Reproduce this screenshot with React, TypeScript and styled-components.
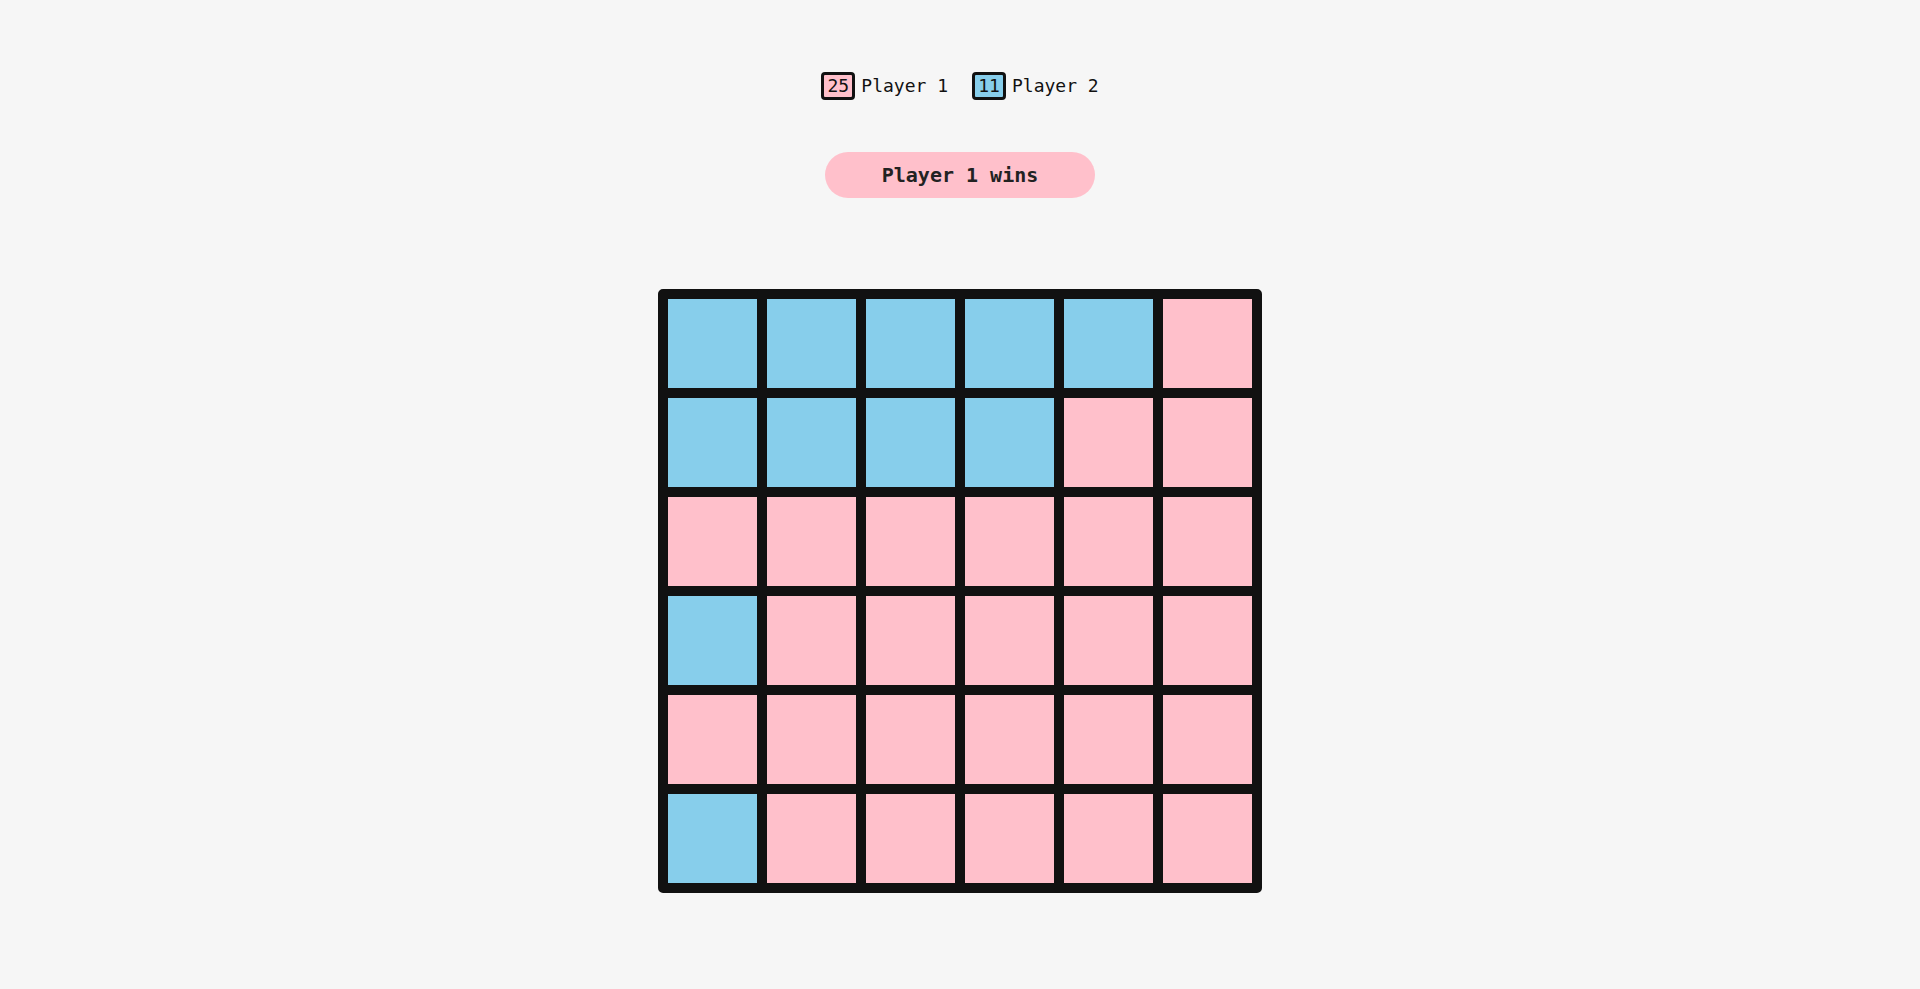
import React from "react";
import styled, { createGlobalStyle } from "styled-components";

const GlobalStyle = createGlobalStyle`
  html, body {
    margin: 0;
    padding: 0;
    background: #f6f6f6;
  }
  body {
    font-family: "DejaVu Sans Mono", "Liberation Mono", monospace;
    color: #111;
  }
`;

const PINK = "#ffc0cb";
const BLUE = "#87ceeb";

const Page = styled.main`
  min-height: 989px;
  display: flex;
  flex-direction: column;
  align-items: center;
  padding-top: 72px;
  box-sizing: border-box;
`;

const Scores = styled.div`
  display: flex;
  align-items: center;
  gap: 24px;
`;

const Score = styled.div`
  display: flex;
  align-items: center;
  gap: 6px;
`;

const Badge = styled.span<{ $color: string }>`
  display: inline-flex;
  align-items: center;
  justify-content: center;
  box-sizing: border-box;
  height: 28px;
  min-width: 34px;
  padding: 0 3px;
  border: 3px solid #111;
  border-radius: 4px;
  background: ${(p) => p.$color};
  font-size: 18px;
  line-height: 1;
  color: #111;
`;

const Label = styled.span`
  font-size: 18px;
  line-height: 1;
  color: #111;
`;

const Banner = styled.div`
  margin-top: 52px;
  box-sizing: border-box;
  width: 270px;
  height: 46px;
  border-radius: 23px;
  background: ${PINK};
  display: flex;
  align-items: center;
  justify-content: center;
  font-size: 20px;
  font-weight: 700;
  color: #222;
`;

const Board = styled.div`
  margin-top: 91px;
  padding: 5px;
  display: grid;
  grid-template-columns: repeat(6, 99px);
  grid-template-rows: repeat(6, 99px);
`;

const Cell = styled.div<{ $color: string }>`
  margin: -5px;
  border: 10px solid #111;
  border-radius: 5px;
  background: ${(p) => p.$color};
`;

const layout = [
  "BBBBBP",
  "BBBBPP",
  "PPPPPP",
  "BPPPPP",
  "PPPPPP",
  "BPPPPP",
];

export default function App() {
  const cells = layout.flatMap((row) => row.split(""));
  const pink = cells.filter((c) => c === "P").length;
  const blue = cells.length - pink;
  return (
    <>
      <GlobalStyle />
      <Page>
        <Scores>
          <Score>
            <Badge $color={PINK}>{pink}</Badge>
            <Label>Player 1</Label>
          </Score>
          <Score>
            <Badge $color={BLUE}>{blue}</Badge>
            <Label>Player 2</Label>
          </Score>
        </Scores>
        <Banner>Player 1 wins</Banner>
        <Board>
          {cells.map((c, i) => (
            <Cell key={i} $color={c === "P" ? PINK : BLUE} />
          ))}
        </Board>
      </Page>
    </>
  );
}
